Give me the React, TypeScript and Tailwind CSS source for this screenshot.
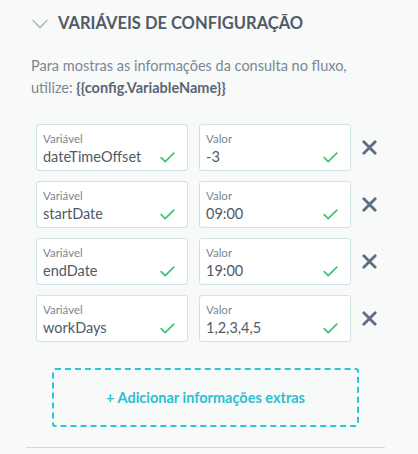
import React from 'react';

const rows = [
  { name: 'dateTimeOffset', value: '-3' },
  { name: 'startDate', value: '09:00' },
  { name: 'endDate', value: '19:00' },
  { name: 'workDays', value: '1,2,3,4,5' },
];

const Check = () => (
  <svg width="15" height="11" viewBox="0 0 15 11" fill="none" className="shrink-0">
    <path d="M1.2 5.6 L5.2 9.6 L13.8 1.2" stroke="#3ec46d" strokeWidth="1.7" strokeLinecap="round" strokeLinejoin="round" />
  </svg>
);

const Field = ({ label, value, width }: { label: string; value: string; width: string }) => (
  <div className={`${width} h-[47px] bg-white border border-[#cfe2e8] rounded-[3px] pl-[6px] pr-[12px] pt-[7px] flex flex-col`}>
    <span className="text-[11.5px] leading-[14px] text-[#7d8793]">{label}</span>
    <div className="flex items-center justify-between mt-[2px]">
      <span className="text-[14.5px] leading-[18px] text-[#4f5a67]">{value}</span>
      <Check />
    </div>
  </div>
);

const App: React.FC = () => {
  return (
    <div className="w-[418px] h-[454px] bg-[#f8f9f9] overflow-hidden" style={{ fontFamily: 'Lato, "Noto Sans", sans-serif' }}>
      <div className="flex items-center pl-[32px] pt-[13px] h-[34px]">
        <svg width="16" height="10" viewBox="0 0 16 10" fill="none">
          <path d="M1 1.5 L8 8.5 L15 1.5" stroke="#a9b9bd" strokeWidth="1.6" strokeLinecap="round" strokeLinejoin="round" />
        </svg>
        <h2 className="ml-[10px] text-[16.5px] font-bold text-[#505b68]">VARIÁVEIS DE CONFIGURAÇÃO</h2>
      </div>

      <p className="mt-[21px] pl-[31px] pr-[10px] text-[14.5px] leading-[22px] text-[#7a8794]">
        Para mostras as informações da consulta no fluxo,
        <br />
        utilize: <span className="font-bold text-[#5b6674]">{'{{config.VariableName}}'}</span>
      </p>

      <div className="mt-[25px] pl-[36px] flex flex-col gap-[10px]">
        {rows.map((r) => (
          <div key={r.name} className="flex items-center gap-[11px]">
            <Field label="Variável" value={r.name} width="w-[152px]" />
            <Field label="Valor" value={r.value} width="w-[152px]" />
            <svg width="15" height="15" viewBox="0 0 15 15" fill="none" className="shrink-0">
              <path d="M1.8 1.8 L13.2 13.2 M13.2 1.8 L1.8 13.2" stroke="#5d6d85" strokeWidth="2.8" strokeLinecap="round" />
            </svg>
          </div>
        ))}
      </div>

      <div className="mt-[26px] ml-[52px] w-[307px] h-[59px] border-2 border-dashed border-[#2cc5d7] rounded-[3px] flex items-center justify-center">
        <span className="text-[14.5px] font-bold text-[#2cc0d3]">+ Adicionar informações extras</span>
      </div>

      <div className="mt-[20px] ml-[26px] w-[359px] h-px bg-[#c9dfe6]" />
    </div>
  );
};

export default App;
